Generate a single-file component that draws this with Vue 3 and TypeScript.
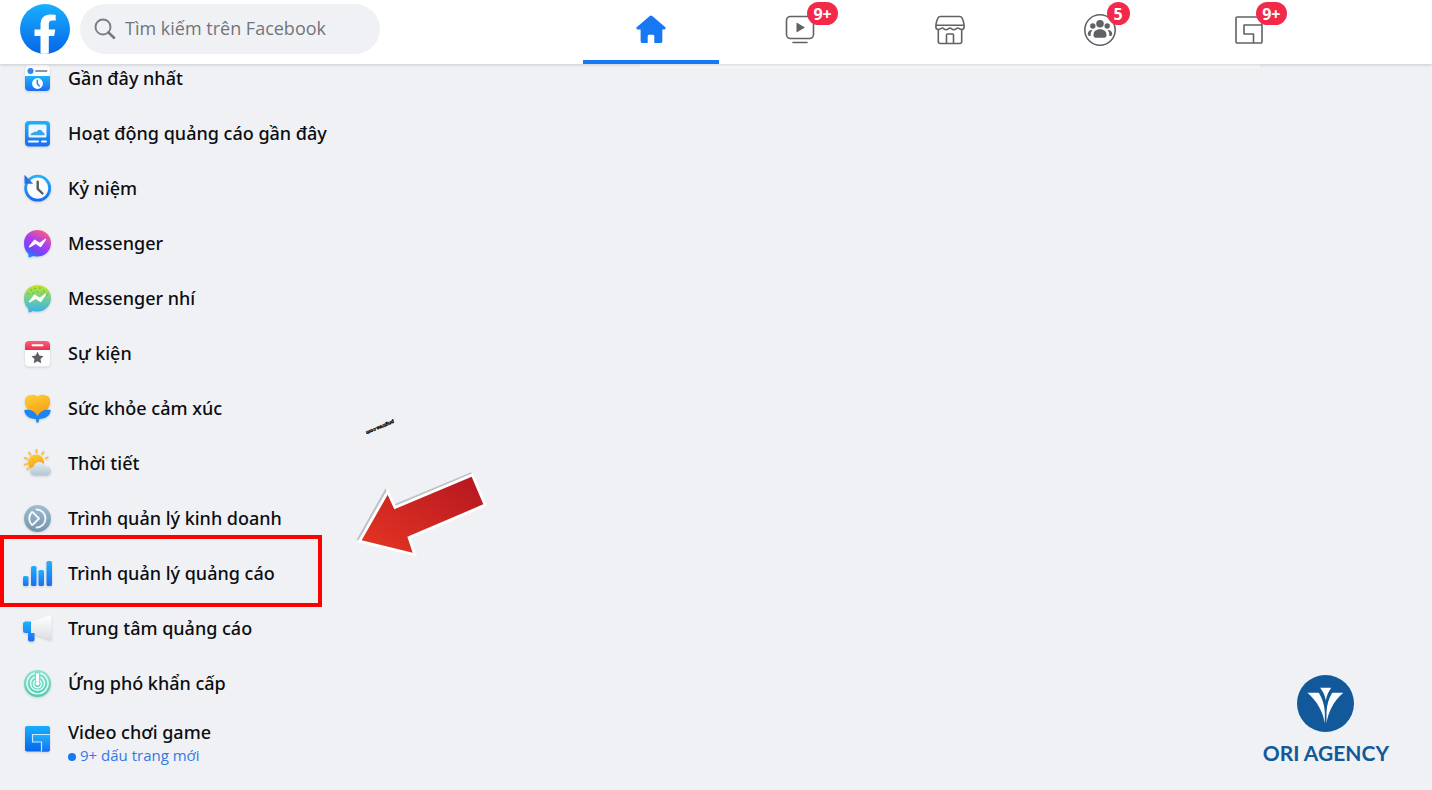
<script setup lang="ts">
interface Bookmark {
  id: string
  label: string
  note?: string
  highlighted?: boolean
}

interface Tab {
  id: string
  label: string
  badge?: string
}

const tabs: Tab[] = [
  { id: 'home', label: 'Trang chủ' },
  { id: 'watch', label: 'Watch', badge: '9+' },
  { id: 'market', label: 'Marketplace' },
  { id: 'groups', label: 'Nhóm', badge: '5' },
  { id: 'gaming', label: 'Chơi game', badge: '9+' },
]

const bookmarks: Bookmark[] = [
  { id: 'recent', label: 'Gần đây nhất' },
  { id: 'adactivity', label: 'Hoạt động quảng cáo gần đây' },
  { id: 'memories', label: 'Kỷ niệm' },
  { id: 'messenger', label: 'Messenger' },
  { id: 'kids', label: 'Messenger nhí' },
  { id: 'events', label: 'Sự kiện' },
  { id: 'health', label: 'Sức khỏe cảm xúc' },
  { id: 'weather', label: 'Thời tiết' },
  { id: 'business', label: 'Trình quản lý kinh doanh' },
  { id: 'ads', label: 'Trình quản lý quảng cáo', highlighted: true },
  { id: 'adcenter', label: 'Trung tâm quảng cáo' },
  { id: 'crisis', label: 'Ứng phó khẩn cấp' },
  { id: 'gamevideo', label: 'Video chơi game', note: '9+ dấu trang mới' },
]
</script>

<template>
  <div class="page">
    <svg class="defs" width="0" height="0" aria-hidden="true">
      <defs>
        <linearGradient id="blue" x1="0" y1="0" x2="0" y2="1">
          <stop offset="0" stop-color="#1fb2fb" />
          <stop offset="1" stop-color="#1a6df2" />
        </linearGradient>
        <linearGradient id="brand" x1="0" y1="0" x2="0" y2="1">
          <stop offset="0" stop-color="#19affd" />
          <stop offset="1" stop-color="#0665e8" />
        </linearGradient>
        <linearGradient id="msg" x1="0.7" y1="0" x2="0.2" y2="1">
          <stop offset="0" stop-color="#fb5c80" />
          <stop offset="0.45" stop-color="#a83cf5" />
          <stop offset="0.75" stop-color="#6b48fb" />
          <stop offset="1" stop-color="#0a94ff" />
        </linearGradient>
        <linearGradient id="kid" x1="0" y1="0" x2="0" y2="1">
          <stop offset="0" stop-color="#c9e61c" />
          <stop offset="0.5" stop-color="#6fcf97" />
          <stop offset="1" stop-color="#35b0ee" />
        </linearGradient>
        <linearGradient id="red" x1="0" y1="0" x2="0" y2="1">
          <stop offset="0" stop-color="#fa6078" />
          <stop offset="1" stop-color="#e8304f" />
        </linearGradient>
        <linearGradient id="gold" x1="0" y1="0" x2="0.4" y2="1">
          <stop offset="0" stop-color="#fdd13a" />
          <stop offset="1" stop-color="#f99c10" />
        </linearGradient>
        <linearGradient id="cloud" x1="0" y1="0" x2="0" y2="1">
          <stop offset="0" stop-color="#e3edf3" />
          <stop offset="1" stop-color="#b4c6d2" />
        </linearGradient>
        <linearGradient id="steel" x1="0" y1="0" x2="0" y2="1">
          <stop offset="0" stop-color="#a0bdd0" />
          <stop offset="1" stop-color="#7494ad" />
        </linearGradient>
        <linearGradient id="mint" x1="0" y1="0" x2="0" y2="1">
          <stop offset="0" stop-color="#8be3cf" />
          <stop offset="1" stop-color="#4fcab0" />
        </linearGradient>
        <linearGradient id="horn" x1="0" y1="0" x2="0" y2="1">
          <stop offset="0" stop-color="#ffffff" />
          <stop offset="1" stop-color="#dcdee2" />
        </linearGradient>
        <linearGradient id="arrow" x1="0" y1="1" x2="1" y2="0">
          <stop offset="0.1" stop-color="#e13223" />
          <stop offset="0.9" stop-color="#b91a20" />
        </linearGradient>
      </defs>
    </svg>

    <header class="topbar">
      <div class="brand">
        <a class="home-link" href="#" aria-label="Facebook">
          <svg viewBox="0 0 50 50" width="50" height="50">
            <circle cx="25" cy="25" r="25" fill="url(#brand)" />
            <path
              d="M20.5 49.6V32H14.500v-6.500h6v-4.600c0-6.800 3.600-10.400 9.800-10.400 2.200 0 4.200.3 5.400.5v5.500h-3.400c-2.700 0-3.500 1.500-3.500 3.300v5.700h6.500l-1.200 6.500h-5.300v17.600a25 25 0 0 1-8.300 0z"
              fill="#fff"
            />
          </svg>
        </a>
        <label class="search">
          <svg viewBox="0 0 22 22" width="22" height="22" aria-hidden="true">
            <circle cx="9" cy="9" r="7.500" fill="none" stroke="#7a7d81" stroke-width="1.900" />
            <path d="M14.400 14.400l5.600 5.400" stroke="#73767a" stroke-width="2.600" stroke-linecap="round" />
          </svg>
          <input type="search" placeholder="Tìm kiếm trên Facebook" aria-label="Tìm kiếm trên Facebook" />
        </label>
      </div>

      <nav class="tabs">
        <a v-for="tab in tabs" :key="tab.id" href="#" class="tab" :class="{ active: tab.id === 'home' }" :aria-label="tab.label">
          <span class="tab-icon">
            <svg v-if="tab.id === 'home'" viewBox="-1 0 36 36" width="34" height="34" fill="#1877f2">
              <path d="M15.700 3.200a2 2 0 0 1 2.600 0l13.600 11.700c1.200 1 .6 2.600-.8 2.600H29v12.300a2 2 0 0 1-2 2h-6.500v-7.300a1.500 1.500 0 0 0-1.500-1.500h-4a1.500 1.500 0 0 0-1.500 1.500v7.300H8a2 2 0 0 1-2-2V17.500H2.900c-1.400 0-2-1.600-.8-2.600z" />
            </svg>
            <svg v-else-if="tab.id === 'watch'" viewBox="0 0 34 34" width="34" height="34" fill="none" stroke="#606266" stroke-width="1.600">
              <rect x="3.500" y="3.500" width="27" height="22" rx="4" />
              <path d="M13.500 9.500l8.500 5-8.500 5z" fill="#606266" stroke="none" />
              <path d="M10 29.500h14" stroke-linecap="round" />
            </svg>
            <svg v-else-if="tab.id === 'market'" viewBox="0 0 34 34" width="34" height="34" fill="none" stroke="#606266" stroke-width="1.600" stroke-linejoin="round">
              <path d="M7.500 3.500h19a3 3 0 0 1 2.700 1.800c1.200 2.700 1.900 4.700 1.900 7.200v1.500c0 1.700-1.200 2.500-2.500 2.500-2 0-2.500-1.500-3.900-1.500s-1.900 1.700-3.800 1.700-2.400-1.700-3.900-1.700-2 1.700-3.900 1.700-2.400-1.700-3.800-1.700-2 1.500-3.900 1.500c-1.300 0-2.500-.8-2.500-2.500v-1.500c0-2.500.7-4.500 1.900-7.200a3 3 0 0 1 2.700-1.800z" />
              <path d="M3 12.200h28M5.300 16.600v11.900a2 2 0 0 0 2 2h19.400a2 2 0 0 0 2-2V16.600M13.500 30.500v-8.500a1 1 0 0 1 1-1h5a1 1 0 0 1 1 1v8.500" />
            </svg>
            <svg v-else-if="tab.id === 'groups'" viewBox="0 0 34 34" width="34" height="34" fill="#606266">
              <circle cx="17" cy="17" r="15.200" fill="none" stroke="#606266" stroke-width="1.600" />
              <circle cx="17" cy="10.800" r="3.800" />
              <circle cx="9.800" cy="13" r="2.700" />
              <circle cx="24.200" cy="13" r="2.700" />
              <path d="M10.500 22c0-3.500 2.500-5.700 6.500-5.700s6.500 2.200 6.500 5.700c0 1.900-.8 2.700-2.200 2.700h-8.600c-1.400 0-2.200-.8-2.200-2.700z" />
              <path d="M9.500 17c-1.500 1.400-2 3.400-1.800 6-2 .1-2.900-.5-2.900-2 0-2.500 1.700-4.400 4.700-4zM24.500 17c1.500 1.400 2 3.400 1.800 6 2 .1 2.900-.5 2.900-2 0-2.500-1.700-4.400-4.700-4z" />
            </svg>
            <svg v-else viewBox="0 0 34 34" width="34" height="34" fill="none" stroke="#606266" stroke-width="1.600" stroke-linejoin="round">
              <path d="M5.200 4h23.600a1.200 1.200 0 0 1 1.200 1.200V12H12v9h9.500v9H5.200A1.200 1.200 0 0 1 4 28.800V5.200A1.200 1.200 0 0 1 5.200 4zM30 12v16.800a1.200 1.200 0 0 1-1.200 1.200h-7.300" />
            </svg>
            <span v-if="tab.badge" class="badge">{{ tab.badge }}</span>
          </span>
        </a>
      </nav>
    </header>

    <main class="content">
      <div class="feed-edge"></div>
      <ul class="bookmarks">
        <li v-for="item in bookmarks" :key="item.id" :class="{ highlighted: item.highlighted }">
          <a href="#" class="bookmark" :class="{ noted: item.note }">
            <svg class="icon" viewBox="0 0 30 30" width="30" height="30" aria-hidden="true">
              <g v-if="item.id === 'recent'">
                <rect x="3" y="2" width="25" height="26" rx="4" fill="#fbfcfe" />
                <path d="M3 13h25V24a4 4 0 0 1-4 4H7a4 4 0 0 1-4-4z" fill="url(#blue)" />
                <circle cx="8.500" cy="8" r="3" fill="#2a87ef" />
                <path d="M14 8h10.500" stroke="#8d949e" stroke-width="1.800" stroke-linecap="round" />
                <circle cx="15.500" cy="20.500" r="5.400" fill="#fff" />
                <path d="M15.300 17.300v3.400l2 2.200" fill="none" stroke="#2a7fef" stroke-width="1.500" stroke-linecap="round" />
              </g>
              <g v-else-if="item.id === 'adactivity'">
                <rect x="3" y="3" width="25" height="25.500" rx="4" fill="url(#blue)" />
                <rect x="6.500" y="6.500" width="18" height="13" rx="1.500" fill="#eef7ff" />
                <path d="M8.500 17.300c.3-2 1.800-2.900 3.300-2.700.7-1.300 1.900-1.600 2.900-.7 1.200-2.800 5-2.900 5.700.2 1.500.2 2.200 1.400 2.300 3.200z" fill="#35a6e8" />
                <path d="M7 23.600h9M20 23.600h4" stroke="#fff" stroke-width="2" stroke-linecap="round" />
              </g>
              <g v-else-if="item.id === 'memories'">
                <circle cx="15.700" cy="15.200" r="12" fill="#fafcff" stroke="url(#blue)" stroke-width="2.800" />
                <path d="M2.500 1.800v9h8.700z" fill="#2671e8" />
                <path d="M15.700 8.800v7l4.800 4.700" fill="none" stroke="#58595d" stroke-width="2.400" stroke-linecap="round" stroke-linejoin="round" />
              </g>
              <g v-else-if="item.id === 'messenger' || item.id === 'kids'">
                <path d="M15.500 2C23.300 2 29 7.600 29 15S23.300 28.500 15.500 28.500c-1.500 0-2.900-.2-4.200-.6-1.900.5-3.400 1.600-4.300 1.500-.8-.1-.4-2.500-.8-3.700C3.500 23.200 2 19.600 2 15.200 2 7.600 7.700 2 15.500 2z" :fill="item.id === 'kids' ? 'url(#kid)' : 'url(#msg)'" />
                <g v-if="item.id === 'kids'" fill="#69c951">
                  <circle cx="9" cy="7" r="1" /><circle cx="13" cy="5.500" r="1" /><circle cx="18" cy="5" r="1" /><circle cx="22" cy="8" r="1" /><circle cx="15.500" cy="9" r="1" /><circle cx="6.500" cy="11" r="1" /><circle cx="25" cy="12" r="1" /><circle cx="11" cy="10" r="1" /><circle cx="19.500" cy="10.500" r="1" />
                </g>
                <path d="M7.500 18.800l5.200-6.500 5 3.300 5.800-4.200-4.800 7-5-3.200z" fill="#fff" stroke="#fff" stroke-width="1.400" stroke-linejoin="round" />
              </g>
              <g v-else-if="item.id === 'events'">
                <rect x="3" y="3" width="25" height="25.500" rx="4" fill="#fdfdfe" />
                <path d="M3 12V7a4 4 0 0 1 4-4h17a4 4 0 0 1 4 4v5z" fill="url(#red)" />
                <path d="M10.500 7.200h10" stroke="#fff" stroke-width="2" stroke-linecap="round" />
                <path d="M15.500 13.800l1.800 3.800 4.200.6-3 2.900.7 4.100-3.700-2-3.700 2 .7-4.100-3-2.900 4.200-.6z" fill="#5c5e62" />
              </g>
              <g v-else-if="item.id === 'health'">
                <path d="M15.500 3.500c3-3 9-2 11.500.500 2 3.500 1.200 8.500-1 11.500-2.500 3.500-6 6-10.500 9.500C11 21.500 7.500 19 5 15.500 2.800 12.500 2 7.500 4 4c2.500-2.500 8.500-3.500 11.500-.5z" fill="url(#gold)" />
                <path d="M2.300 17c5.500-.8 10 .500 13.200 6.200C18.700 17.500 23.200 16.200 28.700 17c0 5-4.300 8.700-11.700 9.200l-.3 3.300h-2.300l-.4-3.300C6.600 25.700 2.300 22 2.300 17z" fill="#1b85f3" />
              </g>
              <g v-else-if="item.id === 'weather'">
                <path d="M14.500 2v2.500M7 4.500l1.700 2.200M2.900 9.800l2.500 1M2.600 16.500l2.700-.7M21.500 3.900l-1.400 2.300M25.700 9.300l-2.100 1.100M5.200 21.300l1.300-1" stroke="#f9bd3a" stroke-width="1.800" stroke-linecap="round" />
                <circle cx="14" cy="14.500" r="8" fill="url(#gold)" />
                <path d="M12 27.500a4.500 4.500 0 0 1-.5-8.800c.7-3 3-4.700 5.600-4.700 2.700 0 4.800 1.600 5.600 4.100 3.800-.2 6.300 1.700 6.300 4.700 0 2.900-2 4.700-4.700 4.700z" fill="url(#cloud)" />
              </g>
              <g v-else-if="item.id === 'business'">
                <circle cx="15.500" cy="15.500" r="13.500" fill="url(#steel)" />
                <path d="M14.500 6.500a9 9 0 1 1 0 18M10 9a9 9 0 0 0 0 13M11 9.500l6 6-6 6" fill="none" stroke="#f2f7fb" stroke-width="1.900" stroke-linejoin="round" stroke-linecap="round" />
              </g>
              <g v-else-if="item.id === 'ads'" fill="url(#blue)">
                <rect x="1" y="18" width="5.500" height="10" rx="1.500" />
                <rect x="9" y="8" width="5.500" height="20" rx="1.500" />
                <rect x="16.500" y="12" width="5.500" height="16" rx="1.500" />
                <rect x="24.500" y="3" width="5.500" height="25" rx="1.500" />
              </g>
              <g v-else-if="item.id === 'adcenter'">
                <path d="M9 8.800L28 2.200a1.200 1.200 0 0 1 1.500 1.100V26c0 1-.8 1.500-1.600 1.100L9 20z" fill="url(#horn)" />
                <path d="M9 8.500H3.500A2.500 2.500 0 0 0 1 11v6.500A2.500 2.500 0 0 0 3.500 20H6v6.500A2 2 0 0 0 8 28.500h2.500a2 2 0 0 0 2-2V20H9z" fill="url(#blue)" />
              </g>
              <g v-else-if="item.id === 'crisis'">
                <circle cx="15.500" cy="15.500" r="13.500" fill="url(#mint)" />
                <g fill="none" stroke="#edfdf9" stroke-width="1.500" stroke-linecap="round">
                  <path d="M12.200 5.300a10.500 10.500 0 1 0 6.600 0M12 9.300a7 7 0 1 0 7 0" />
                  <path d="M12.700 13a4 4 0 1 0 5.600 0" />
                </g>
                <path d="M14 5.500h3v8h-3z" fill="#fff" />
                <circle cx="15.500" cy="15.500" r="1.900" fill="#fff" />
              </g>
              <g v-else>
                <path d="M5 3h21a2 2 0 0 1 2 2v21.500a2 2 0 0 1-2 2H5a2 2 0 0 1-2-2V5a2 2 0 0 1 2-2z" fill="url(#brand)" />
                <path d="M10.500 11.500H28v15a2 2 0 0 1-2 2h-6.500V19h-9z" fill="url(#blue)" />
                <path d="M28 11.500H10.500V19h9v9.500" fill="none" stroke="#c8ecff" stroke-width="1.200" />
              </g>
            </svg>
            <span class="text">
              <span class="label">{{ item.label }}</span>
              <span v-if="item.note" class="note">{{ item.note }}</span>
            </span>
          </a>
        </li>
      </ul>

      <svg class="pointer" viewBox="0 0 480 480" width="160" height="160" aria-hidden="true">
        <text class="pointer-mark" transform="translate(160 30) rotate(157)">pngtree.com</text>
        <g stroke-linejoin="miter" stroke-miterlimit="6">
          <path d="M58 386L136 247L158 291L390 194L425 277L197 374L213 422z" fill="#bfc1c4" stroke="#bfc1c4" stroke-width="11" />
          <path d="M65 391L143 254L163 298L395 200L430 283L202 380L218 428z" fill="#fff" stroke="#fff" stroke-width="17" />
          <path d="M65 391L143 254L163 298L395 200L430 283L202 380L218 428z" fill="url(#arrow)" />
        </g>
      </svg>

      <div class="agency">
        <svg viewBox="0 0 170 170" width="57" height="57" aria-hidden="true">
          <circle cx="85" cy="85" r="85" fill="#12599b" />
          <path d="M31 53h34c10 17 17 35 18 58v34C78 110 60 78 31 53zM138 53h-33c-10 17-16 35-17 58v34c5-35 21-67 50-92zM69 38h33c-8 12-13 22-16 38-3-16-8-26-17-38z" fill="#fff" />
        </svg>
        <span>ORI AGENCY</span>
      </div>
    </main>
  </div>
</template>

<style>
html,
body {
  background: #f0f1f5;
}
</style>

<style scoped>
.page {
  height: 100vh;
  display: flex;
  flex-direction: column;
  overflow: hidden;
  color: #0b0d10;
  background: #f0f1f5;
  font-family: 'Noto Sans', 'Open Sans', sans-serif;
}

.defs {
  position: absolute;
}

.topbar {
  position: relative;
  z-index: 2;
  flex: none;
  height: 64px;
  display: grid;
  grid-template-columns: 576fr 748fr 108fr;
  background: #fff;
  box-shadow: 0 1px 3px rgba(0, 0, 0, 0.16);
}

.brand {
  display: flex;
  align-items: center;
  gap: 10px;
  padding: 0 20px 6px;
}

.home-link {
  display: flex;
}

.search {
  width: 300px;
  height: 50px;
  box-sizing: border-box;
  display: flex;
  align-items: center;
  gap: 9px;
  padding: 0 14px;
  border-radius: 25px;
  background: #f0f1f5;
}

.search svg {
  flex: none;
}

.search input {
  flex: 1;
  min-width: 0;
  padding: 0 0 2px;
  border: 0;
  outline: 0;
  background: transparent;
  font: 400 18px/24px 'Open Sans', 'Noto Sans', sans-serif;
  color: #0b0d10;
}

.search input::placeholder {
  color: #72757a;
  opacity: 1;
}

.tabs {
  display: grid;
  grid-template-columns: repeat(5, 1fr);
}

.tab {
  display: flex;
  align-items: center;
  justify-content: center;
  margin: 0 7px;
  padding-bottom: 4px;
  box-sizing: border-box;
  text-decoration: none;
}

.tab.active {
  padding-bottom: 0;
  border-bottom: 4px solid #1877f2;
}

.tab-icon {
  position: relative;
  display: flex;
}

.badge {
  position: absolute;
  left: 24px;
  top: -11px;
  min-width: 23px;
  height: 23px;
  box-sizing: border-box;
  padding: 0 6px;
  border-radius: 12px;
  background: #f3294a;
  color: #fff;
  font-size: 16px;
  font-weight: 700;
  line-height: 24px;
  text-align: center;
}

.content {
  position: relative;
  flex: 1;
  min-height: 0;
}

.feed-edge {
  width: 620px;
  height: 4px;
  position: absolute;
  left: 640px;
  top: 0;
  background: #fafafa;
}

.bookmarks {
  list-style: none;
  margin: -14px 0 0;
  padding: 0;
  width: 360px;
}

.bookmarks li {
  position: relative;
}

.highlighted::after {
  content: '';
  position: absolute;
  left: 0;
  top: -10px;
  width: 322px;
  height: 72px;
  box-sizing: border-box;
  border: 4px solid #fe0000;
  pointer-events: none;
}

.bookmark {
  display: flex;
  align-items: center;
  gap: 16px;
  min-height: 55px;
  padding-left: 22px;
  color: inherit;
  text-decoration: none;
}

.icon {
  flex: none;
  overflow: visible;
  filter: drop-shadow(0 1px 1px rgba(0, 0, 0, 0.14));
}

.text {
  display: flex;
  flex-direction: column;
}

.label {
  font-size: 18px;
  font-weight: 500;
  line-height: 24px;
  white-space: nowrap;
}

.noted .text {
  padding-top: 10px;
}

.note {
  display: flex;
  align-items: center;
  gap: 4px;
  font-family: 'Open Sans', 'Noto Sans', sans-serif;
  font-size: 15px;
  line-height: 22px;
  color: #3578e5;
}

.note::before {
  content: '';
  width: 8px;
  height: 8px;
  margin-top: 3px;
  border-radius: 50%;
  background: #1877f2;
}

.pointer {
  position: absolute;
  left: 340px;
  top: 346px;
}

.pointer-mark {
  font: italic 700 15px 'Liberation Sans', sans-serif;
  fill: #000;
  stroke: #000;
  stroke-width: 1px;
}

.agency {
  position: absolute;
  right: 43px;
  bottom: 24px;
  display: flex;
  flex-direction: column;
  align-items: center;
  gap: 8px;
  color: #12599b;
  font: 700 21px/26px Lato, sans-serif;
}
</style>
